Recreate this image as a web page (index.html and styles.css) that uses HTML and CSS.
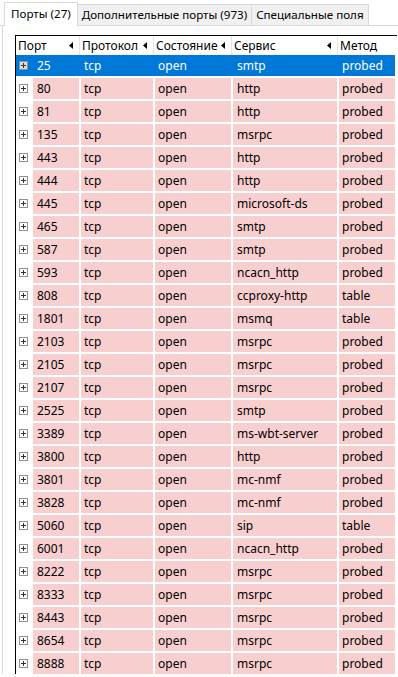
FILE: index.html
```html
<!DOCTYPE html>
<html lang="ru">
<head>
  <meta charset="UTF-8">
  <title>Порты</title>
  <link rel="stylesheet" href="styles.css">
</head>
<body>

<div class="tabs">
  <div class="tab active">Порты (27)</div>
  <div class="tab">Дополнительные порты (973)</div>
  <div class="tab">Специальные поля</div>
</div>

<div class="panel">
  <div class="grid">
    <div class="head">
      <div class="hcell c-port">Порт <svg class="arrow" width="4" height="7"><polygon points="4,0 4,7 0,3.5" fill="#000"/></svg></div>
      <div class="hcell c-proto">Протокол <svg class="arrow" width="4" height="7"><polygon points="4,0 4,7 0,3.5" fill="#000"/></svg></div>
      <div class="hcell c-state">Состояние <svg class="arrow" width="4" height="7"><polygon points="4,0 4,7 0,3.5" fill="#000"/></svg></div>
      <div class="hcell c-serv">Сервис <svg class="arrow" width="4" height="7"><polygon points="4,0 4,7 0,3.5" fill="#000"/></svg></div>
      <div class="hcell c-meth">Метод</div>
    </div>

    <div class="row selected"><div class="exp"><span class="plus"></span></div><div class="cell w-port">25</div><div class="cell w-proto">tcp</div><div class="cell w-state">open</div><div class="cell w-serv">smtp</div><div class="cell w-meth">probed</div></div>
    <div class="row"><div class="exp"><span class="plus"></span></div><div class="cell w-port">80</div><div class="cell w-proto">tcp</div><div class="cell w-state">open</div><div class="cell w-serv">http</div><div class="cell w-meth">probed</div></div>
    <div class="row"><div class="exp"><span class="plus"></span></div><div class="cell w-port">81</div><div class="cell w-proto">tcp</div><div class="cell w-state">open</div><div class="cell w-serv">http</div><div class="cell w-meth">probed</div></div>
    <div class="row"><div class="exp"><span class="plus"></span></div><div class="cell w-port">135</div><div class="cell w-proto">tcp</div><div class="cell w-state">open</div><div class="cell w-serv">msrpc</div><div class="cell w-meth">probed</div></div>
    <div class="row"><div class="exp"><span class="plus"></span></div><div class="cell w-port">443</div><div class="cell w-proto">tcp</div><div class="cell w-state">open</div><div class="cell w-serv">http</div><div class="cell w-meth">probed</div></div>
    <div class="row"><div class="exp"><span class="plus"></span></div><div class="cell w-port">444</div><div class="cell w-proto">tcp</div><div class="cell w-state">open</div><div class="cell w-serv">http</div><div class="cell w-meth">probed</div></div>
    <div class="row"><div class="exp"><span class="plus"></span></div><div class="cell w-port">445</div><div class="cell w-proto">tcp</div><div class="cell w-state">open</div><div class="cell w-serv">microsoft-ds</div><div class="cell w-meth">probed</div></div>
    <div class="row"><div class="exp"><span class="plus"></span></div><div class="cell w-port">465</div><div class="cell w-proto">tcp</div><div class="cell w-state">open</div><div class="cell w-serv">smtp</div><div class="cell w-meth">probed</div></div>
    <div class="row"><div class="exp"><span class="plus"></span></div><div class="cell w-port">587</div><div class="cell w-proto">tcp</div><div class="cell w-state">open</div><div class="cell w-serv">smtp</div><div class="cell w-meth">probed</div></div>
    <div class="row"><div class="exp"><span class="plus"></span></div><div class="cell w-port">593</div><div class="cell w-proto">tcp</div><div class="cell w-state">open</div><div class="cell w-serv">ncacn_http</div><div class="cell w-meth">probed</div></div>
    <div class="row"><div class="exp"><span class="plus"></span></div><div class="cell w-port">808</div><div class="cell w-proto">tcp</div><div class="cell w-state">open</div><div class="cell w-serv">ccproxy-http</div><div class="cell w-meth">table</div></div>
    <div class="row"><div class="exp"><span class="plus"></span></div><div class="cell w-port">1801</div><div class="cell w-proto">tcp</div><div class="cell w-state">open</div><div class="cell w-serv">msmq</div><div class="cell w-meth">table</div></div>
    <div class="row"><div class="exp"><span class="plus"></span></div><div class="cell w-port">2103</div><div class="cell w-proto">tcp</div><div class="cell w-state">open</div><div class="cell w-serv">msrpc</div><div class="cell w-meth">probed</div></div>
    <div class="row"><div class="exp"><span class="plus"></span></div><div class="cell w-port">2105</div><div class="cell w-proto">tcp</div><div class="cell w-state">open</div><div class="cell w-serv">msrpc</div><div class="cell w-meth">probed</div></div>
    <div class="row"><div class="exp"><span class="plus"></span></div><div class="cell w-port">2107</div><div class="cell w-proto">tcp</div><div class="cell w-state">open</div><div class="cell w-serv">msrpc</div><div class="cell w-meth">probed</div></div>
    <div class="row"><div class="exp"><span class="plus"></span></div><div class="cell w-port">2525</div><div class="cell w-proto">tcp</div><div class="cell w-state">open</div><div class="cell w-serv">smtp</div><div class="cell w-meth">probed</div></div>
    <div class="row"><div class="exp"><span class="plus"></span></div><div class="cell w-port">3389</div><div class="cell w-proto">tcp</div><div class="cell w-state">open</div><div class="cell w-serv">ms-wbt-server</div><div class="cell w-meth">probed</div></div>
    <div class="row"><div class="exp"><span class="plus"></span></div><div class="cell w-port">3800</div><div class="cell w-proto">tcp</div><div class="cell w-state">open</div><div class="cell w-serv">http</div><div class="cell w-meth">probed</div></div>
    <div class="row"><div class="exp"><span class="plus"></span></div><div class="cell w-port">3801</div><div class="cell w-proto">tcp</div><div class="cell w-state">open</div><div class="cell w-serv">mc-nmf</div><div class="cell w-meth">probed</div></div>
    <div class="row"><div class="exp"><span class="plus"></span></div><div class="cell w-port">3828</div><div class="cell w-proto">tcp</div><div class="cell w-state">open</div><div class="cell w-serv">mc-nmf</div><div class="cell w-meth">probed</div></div>
    <div class="row"><div class="exp"><span class="plus"></span></div><div class="cell w-port">5060</div><div class="cell w-proto">tcp</div><div class="cell w-state">open</div><div class="cell w-serv">sip</div><div class="cell w-meth">table</div></div>
    <div class="row"><div class="exp"><span class="plus"></span></div><div class="cell w-port">6001</div><div class="cell w-proto">tcp</div><div class="cell w-state">open</div><div class="cell w-serv">ncacn_http</div><div class="cell w-meth">probed</div></div>
    <div class="row"><div class="exp"><span class="plus"></span></div><div class="cell w-port">8222</div><div class="cell w-proto">tcp</div><div class="cell w-state">open</div><div class="cell w-serv">msrpc</div><div class="cell w-meth">probed</div></div>
    <div class="row"><div class="exp"><span class="plus"></span></div><div class="cell w-port">8333</div><div class="cell w-proto">tcp</div><div class="cell w-state">open</div><div class="cell w-serv">msrpc</div><div class="cell w-meth">probed</div></div>
    <div class="row"><div class="exp"><span class="plus"></span></div><div class="cell w-port">8443</div><div class="cell w-proto">tcp</div><div class="cell w-state">open</div><div class="cell w-serv">msrpc</div><div class="cell w-meth">probed</div></div>
    <div class="row"><div class="exp"><span class="plus"></span></div><div class="cell w-port">8654</div><div class="cell w-proto">tcp</div><div class="cell w-state">open</div><div class="cell w-serv">msrpc</div><div class="cell w-meth">probed</div></div>
    <div class="row"><div class="exp"><span class="plus"></span></div><div class="cell w-port">8888</div><div class="cell w-proto">tcp</div><div class="cell w-state">open</div><div class="cell w-serv">msrpc</div><div class="cell w-meth">probed</div></div>
  </div>
</div>

</body>
</html>
```

FILE: styles.css
```css
body {
  margin: 0;
  background: #fff;
  font-family: "Noto Sans", "Open Sans", sans-serif;
  font-size: 12px;
  color: #000;
  overflow: hidden;
}

/* Onglets */
.tabs {
  display: flex;
  align-items: flex-end;
  height: 25px;
  padding-left: 4px;
  border-bottom: 1px solid #d9d9d9;
  font-size: 11.6px;
}
.tab {
  height: 20px;
  line-height: 20px;
  padding: 0 4px;
  background: #f0f0f0;
  border: 1px solid #d9d9d9;
  border-bottom: none;
  margin-left: -1px;
}
.tab.active {
  height: 23px;
  line-height: 22px;
  padding: 0 6px;
  background: #fff;
  margin-left: 0;
  margin-bottom: -1px;
  position: relative;
}

.panel {
  border-left: 1px solid #d9d9d9;
  margin-left: 2px;
  padding: 9px 0 0 12px;
}

.grid {
  width: 381px;
  border-left: 1px solid #000;
  border-top: 1px solid #000;
}

/* En-tête */
.head {
  display: flex;
  height: 19px;
}
.hcell {
  display: flex;
  align-items: center;
  justify-content: space-between;
  padding: 0 6px 0 2px;
  border-right: 1px solid #e5e5e5;
  box-sizing: border-box;
  white-space: nowrap;
}
.c-port { width: 64px; }
.c-proto { width: 74px; }
.c-state { width: 78px; }
.c-serv { width: 106px; }
.c-meth { flex: 1; border-right: none; }
.arrow { flex: none; }

/* Lignes */
.row {
  display: flex;
  gap: 2px;
  height: 21px;
  margin-bottom: 2px;
  width: 379px;
}
.exp {
  width: 15px;
  flex: none;
  display: flex;
  align-items: center;
  padding-left: 3px;
  box-sizing: border-box;
}
.plus {
  width: 9px;
  height: 9px;
  box-sizing: border-box;
  border: 1px solid #919191;
  background: linear-gradient(#333, #333) center / 5px 1px no-repeat,
              linear-gradient(#333, #333) center / 1px 5px no-repeat,
              #fff;
}
.cell {
  flex: none;
  background: #f8cfcf;
  line-height: 21px;
  padding-left: 3px;
  box-sizing: border-box;
  white-space: nowrap;
  overflow: hidden;
}
.w-port { width: 46px; padding-left: 4px; }
.w-proto { width: 72px; }
.w-state { width: 76px; }
.w-serv { width: 104px; padding-left: 4px; }
.w-meth { width: 56px; }

.row.selected {
  background: #0078d7;
  color: #fff;
}
.row.selected .cell {
  background: transparent;
}
.row.selected .plus {
  background: linear-gradient(#333, #333) center / 5px 1px no-repeat,
              linear-gradient(#333, #333) center / 1px 5px no-repeat,
              #dcdcdc;
}
```
